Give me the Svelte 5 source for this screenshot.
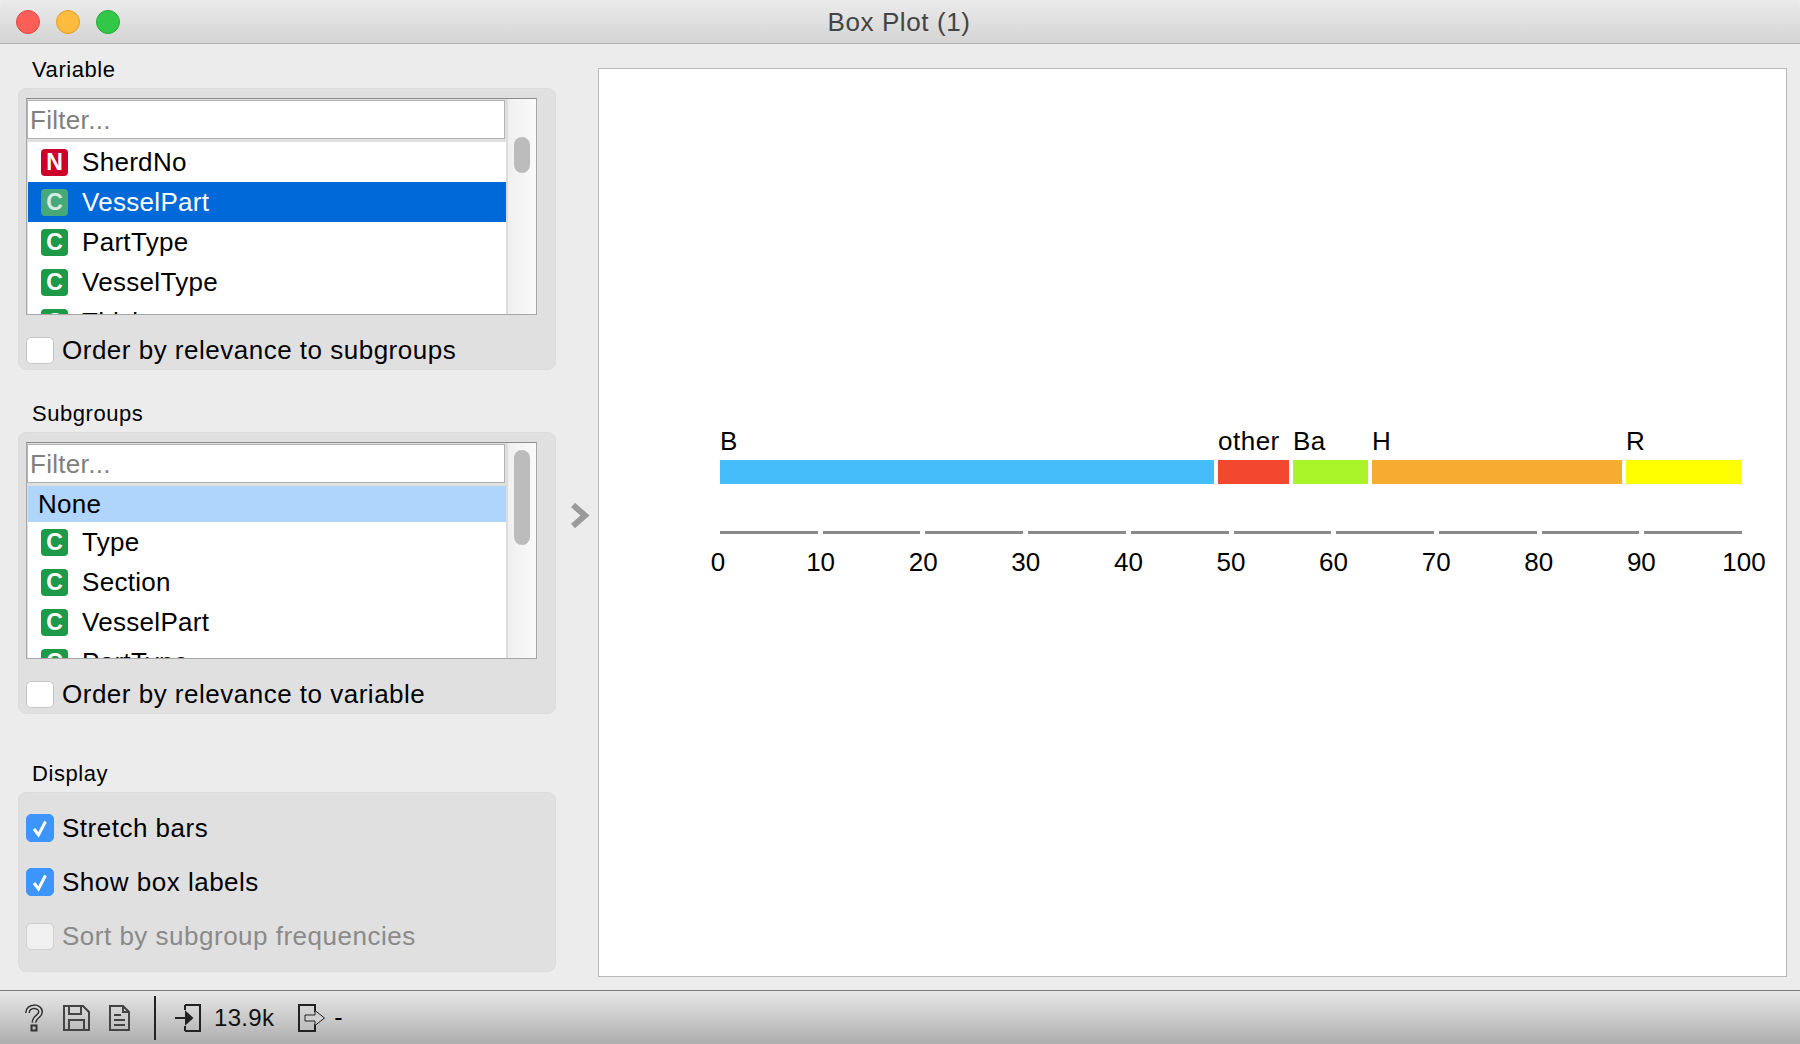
<script>
    const variables = [
        { type: "N", name: "SherdNo" },
        { type: "C", name: "VesselPart", selected: true },
        { type: "C", name: "PartType" },
        { type: "C", name: "VesselType" },
        { type: "C", name: "Thickness" }
    ];
    const subgroups = [
        { type: "C", name: "Type" },
        { type: "C", name: "Section" },
        { type: "C", name: "VesselPart" },
        { type: "C", name: "PartType" }
    ];
    const boxes = [
        { label: "B", width: 494, color: "#46bdfb" },
        { label: "other", width: 71, color: "#f1482f" },
        { label: "Ba", width: 75, color: "#aaf52a" },
        { label: "H", width: 250, color: "#f6ac30" },
        { label: "R", width: 116, color: "#ffff00" }
    ];
    const ticks = [0, 10, 20, 30, 40, 50, 60, 70, 80, 90, 100];
    const display = [
        { text: "Stretch bars", checked: true },
        { text: "Show box labels", checked: true },
        { text: "Sort by subgroup frequencies", disabled: true }
    ];
</script>

<div class="window">
    <header class="titlebar">
        <div class="lights">
            <span class="light red"></span>
            <span class="light yellow"></span>
            <span class="light green"></span>
        </div>
        <span class="title">Box Plot (1)</span>
    </header>

    <div class="main">
        <aside class="sidebar">
            <section>
                <div class="label">Variable</div>
                <div class="box">
                    <div class="listbox">
                        <div class="listcol">
                            <div class="filter">Filter...</div>
                            <ul class="rows">
                                {#each variables as v}
                                    <li class="row" class:selected={v.selected}>
                                        <span class="vicon" class:num={v.type === "N"}>{v.type}</span>
                                        {v.name}
                                    </li>
                                {/each}
                            </ul>
                        </div>
                        <div class="scroll"><div class="thumb short"></div></div>
                    </div>
                    <div class="check first"><span class="cb"></span>Order by relevance to subgroups</div>
                </div>
            </section>

            <section class="second">
                <div class="label">Subgroups</div>
                <div class="box">
                    <div class="listbox">
                        <div class="listcol">
                            <div class="filter">Filter...</div>
                            <ul class="rows">
                                <li class="row none">None</li>
                                {#each subgroups as v}
                                    <li class="row">
                                        <span class="vicon">{v.type}</span>
                                        {v.name}
                                    </li>
                                {/each}
                            </ul>
                        </div>
                        <div class="scroll"><div class="thumb long"></div></div>
                    </div>
                    <div class="check first"><span class="cb"></span>Order by relevance to variable</div>
                </div>
            </section>

            <section class="third">
                <div class="label">Display</div>
                <div class="box displaybox">
                    {#each display as d}
                        <div class="check" class:disabled={d.disabled}>
                            <span class="cb" class:on={d.checked}>
                                {#if d.checked}
                                    <svg width="28" height="28" viewBox="0 0 28 28">
                                        <path d="M8 15 L12.5 21 L19.5 7.5" fill="none" stroke="#fff" stroke-width="3" />
                                    </svg>
                                {/if}
                            </span>
                            <span class="checktext">{d.text}</span>
                        </div>
                    {/each}
                </div>
            </section>
        </aside>

        <div class="splitter">
            <svg width="20" height="27" viewBox="0 0 20 27">
                <path d="M3 3 L15 13.5 L3 24" fill="none" stroke="#9a9a9a" stroke-width="6" />
            </svg>
        </div>

        <div class="plot">
            <div class="bars">
                {#each boxes as b}
                    <div class="seg" style="width: {b.width}px">
                        <div class="seglabel">{b.label}</div>
                        <div class="bar" style="background: {b.color}"></div>
                    </div>
                {/each}
            </div>
            <div class="axis">
                {#each ticks.slice(1) as t}
                    <span class="axisline"></span>
                {/each}
            </div>
            <div class="ticks">
                {#each ticks as t}
                    <span class="tick"><span>{t}</span></span>
                {/each}
            </div>
        </div>
    </div>

    <footer class="status">
        <svg class="ic" width="20" height="28" viewBox="0 0 20 28">
            <path d="M3.5 9 C3.5 1 16.5 1 16.5 8 C16.5 12.5 10 12.5 10 18.5" fill="none" stroke="#333" stroke-width="5" />
            <path d="M3.5 9 C3.5 1 16.5 1 16.5 8 C16.5 12.5 10 12.5 10 18.5" fill="none" stroke="#d8d8d8" stroke-width="2" />
            <rect x="7.5" y="21.5" width="5" height="5" fill="none" stroke="#333" stroke-width="2" />
        </svg>
        <svg class="ic save" width="27" height="26" viewBox="0 0 27 26">
            <path d="M1 1 H20 L26 7 V25 H1 Z" fill="none" stroke="#444" stroke-width="2" />
            <path d="M6 1 V9 H18 V1 M6 25 V15 H21 V25" fill="none" stroke="#444" stroke-width="2" />
        </svg>
        <svg class="ic doc" width="21" height="26" viewBox="0 0 21 26">
            <path d="M1 1 H14 L20 7 V25 H1 Z M14 1 V7 H20" fill="none" stroke="#444" stroke-width="2" />
            <path d="M5 10 H12 M5 15 H16 M5 20 H16" fill="none" stroke="#444" stroke-width="2" />
        </svg>
        <span class="divider"></span>
        <svg class="ic" width="26" height="28" viewBox="0 0 26 28">
            <path d="M10 1 H25 V27 H10 M10 1 V6 M10 22 V27" fill="none" stroke="#222" stroke-width="2" />
            <path d="M0 14 H16 M11 8.5 L17 14 L11 19.5 Z" fill="#222" stroke="#222" stroke-width="2" />
        </svg>
        <span class="count">13.9k</span>
        <svg class="ic out" width="28" height="28" viewBox="0 0 28 28">
            <path d="M17 8 V1 H1 V27 H17 V20" fill="none" stroke="#222" stroke-width="2" />
            <path d="M7 11 H17 V6.5 L26.5 14 L17 21.5 V17 H7 Z" fill="#d0d0d0" stroke="#222" stroke-width="1" />
        </svg>
        <span class="dash">-</span>
    </footer>
</div>

<style>
    :global(body) {
        margin: 0;
        background: #ececec;
    }
    .window {
        width: 1800px;
        height: 1044px;
        display: flex;
        flex-direction: column;
        overflow: hidden;
        background: #ececec;
        font-family: "Liberation Sans", Arial, sans-serif;
        color: #000;
    }
    .titlebar {
        height: 43px;
        flex: none;
        display: flex;
        align-items: center;
        justify-content: center;
        position: relative;
        border-bottom: 1px solid #b4b4b4;
        background: linear-gradient(#ebebeb, #d4d4d4);
        border-radius: 8px 8px 0 0;
    }
    .lights {
        position: absolute;
        left: 16px;
        top: 10px;
        display: flex;
        gap: 16px;
    }
    .light {
        width: 24px;
        height: 24px;
        border-radius: 50%;
        box-sizing: border-box;
    }
    .red { background: #fc5f58; border: 1px solid #e2463f; }
    .yellow { background: #fdbc40; border: 1px solid #e09e2a; }
    .green { background: #33c748; border: 1px solid #25a934; }
    .title {
        font-size: 26px;
        letter-spacing: 0.6px;
        color: #444;
        margin: 2px 0 0 -2px;
    }

    .main {
        flex: 1;
        display: flex;
        min-height: 0;
    }
    .sidebar {
        width: 538px;
        flex: none;
        margin-left: 18px;
        padding-top: 15px;
    }
    .second { margin-top: 33px; }
    .third { margin-top: 49px; }
    .label {
        height: 20px;
        line-height: 21px;
        font-size: 22px;
        letter-spacing: 0.55px;
        padding-left: 14px;
        margin-bottom: 9px;
    }
    .box {
        height: 282px;
        box-sizing: border-box;
        padding: 9px 7px 0;
        background: #e0e0e0;
        border: 1px solid #dcdcdc;
        border-radius: 8px;
    }
    .displaybox {
        height: 180px;
        padding-top: 21px;
        display: flex;
        flex-direction: column;
        gap: 26px;
    }
    .listbox {
        height: 217px;
        width: 511px;
        box-sizing: border-box;
        display: flex;
        border: 1px solid #a6a6a6;
        border-top-color: #8c8c8c;
        overflow: hidden;
        background: #e0e0e0;
    }
    .listcol {
        width: 479px;
        flex: none;
        display: flex;
        flex-direction: column;
    }
    .filter {
        height: 39px;
        flex: none;
        box-sizing: border-box;
        margin-top: 1px;
        background: #fff;
        border: 1.5px solid #b2b2b2;
        color: #808080;
        font-size: 26px;
        letter-spacing: 0.3px;
        line-height: 39px;
        padding-left: 2px;
        margin-right: 1px;
    }
    .rows {
        list-style: none;
        margin: 3px 0 0 1px;
        padding: 0;
        background: #fff;
        flex: 1;
        overflow: hidden;
    }
    .row {
        height: 40px;
        display: flex;
        align-items: center;
        font-size: 26px;
        letter-spacing: 0.3px;
        padding-left: 13px;
    }
    .row.selected {
        background: #0069d9;
        color: #fff;
    }
    .row.none {
        height: 36px;
        background: #b0d5fd;
        padding-left: 10px;
    }
    .vicon {
        width: 27px;
        height: 27px;
        flex: none;
        margin-right: 14px;
        display: flex;
        align-items: center;
        justify-content: center;
        border-radius: 4px;
        background: #1c9a47;
        color: #fff;
        font-size: 23px;
        font-weight: bold;
        letter-spacing: 0;
    }
    .vicon.num { background: #cc0028; }
    .selected .vicon { background: #47a87a; color: #d6ece2; }
    .scroll {
        flex: 1;
        background: linear-gradient(90deg, #f0f0f0, #fafafa);
        border-left: 2px solid #dcdcdc;
        padding-left: 6px;
    }
    .thumb {
        width: 16px;
        background: #bcbcbc;
        border-radius: 8px;
    }
    .thumb.short { height: 36px; margin-top: 38px; }
    .thumb.long { height: 95px; margin-top: 7px; }
    .check {
        height: 28px;
        display: flex;
        align-items: center;
        font-size: 26px;
        line-height: 30px;
        letter-spacing: 0.5px;
    }
    .check.first { margin-top: 21px; }
    .check.disabled { color: #8a8a8a; }
    .cb {
        width: 28px;
        height: 27px;
        flex: none;
        box-sizing: border-box;
        margin-right: 8px;
        background: #fff;
        border: 1px solid #c4c4c4;
        border-radius: 5px;
    }
    .cb.on {
        background: #3d95fb;
        border-color: #3d95fb;
        height: 28px;
    }
    .cb svg { display: block; margin: -1px; }
    .disabled .cb {
        background: #f0f0f0;
        border-color: #cfcfcf;
    }

    .splitter {
        width: 42px;
        box-sizing: border-box;
        flex: none;
        display: flex;
        align-items: center;
        justify-content: center;
        padding: 0 0 4px 6px;
    }
    .plot {
        width: 1189px;
        box-sizing: border-box;
        flex: none;
        margin: 24px 0 13px;
        padding: 360px 0 0 121px;
        background: #fff;
        border: 1px solid #b9b9b9;
    }
    .bars {
        display: flex;
        gap: 4px;
    }
    .seglabel {
        height: 31px;
        line-height: 24px;
        font-size: 26px;
        letter-spacing: 0.5px;
        white-space: nowrap;
    }
    .bar { height: 24px; }
    .axis {
        display: flex;
        gap: 5px;
        width: 1022px;
        margin-top: 47px;
    }
    .axisline {
        flex: 1;
        height: 3px;
        background: #8a8a8a;
    }
    .ticks {
        display: flex;
        justify-content: space-between;
        width: 1026px;
        margin: 14px 0 0 -2px;
    }
    .tick {
        width: 0;
        display: flex;
        justify-content: center;
        font-size: 26px;
        line-height: 28px;
    }
    .tick span { white-space: nowrap; }

    .status {
        height: 53px;
        flex: none;
        display: flex;
        align-items: center;
        padding-left: 24px;
        border-top: 1px solid #7c7c7c;
        background: linear-gradient(#e8e8e8, #adadad);
    }
    .ic { flex: none; display: block; }
    .save { margin-left: 19px; }
    .doc { margin-left: 19px; }
    .divider {
        width: 2px;
        height: 44px;
        background: #222;
        margin: 0 19px 0 24px;
    }
    .count {
        font-size: 24px;
        letter-spacing: 0.3px;
        margin: 0 24px 0 13px;
        color: #111;
    }
    .dash {
        font-size: 25px;
        margin-left: 8px;
    }
</style>
